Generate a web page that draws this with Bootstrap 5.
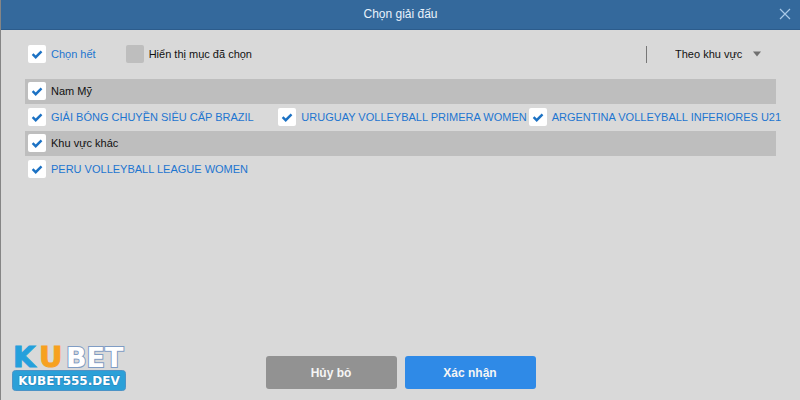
<!DOCTYPE html>
<html lang="vi">
<head>
<meta charset="utf-8">
<meta name="viewport" content="width=device-width, initial-scale=1">
<title>Chọn giải đấu</title>
<link href="https://cdn.jsdelivr.net/npm/bootstrap@5.3.0/dist/css/bootstrap.min.css" rel="stylesheet">
<style>
body { font-family: "Liberation Sans", Arial, sans-serif; font-size: 11px; line-height: 18px; color: #111; background: #d9d9d9; border-left: 1px solid #858585; }
.titlebar { background: #34699c; color: #e8f2fb; height: 30px; border-bottom: 1px solid #2c5c8c; }
.titlebar h1 { font-size: 12px; line-height: 18px; margin: 0 0 2px; font-weight: 400; }
.close-btn { color: #a9c9e8; line-height: 0; right: 8px; top: 7px; }
.toolbar { padding: 15px 24px 16px 27px; }
.filters { gap: 30px; }
.form-check-input.tick { width: 18px; height: 18px; margin: 0; border: 0; border-radius: 2px; background-color: #bebebe; flex: none; }
.form-check-input.tick:checked { background-color: #fff; background-size: 18px 18px; background-image: url("data:image/svg+xml,%3Csvg xmlns='http://www.w3.org/2000/svg' viewBox='0 0 18 18'%3E%3Cpath d='M4.6 9.2 7.7 12.2 13.5 6.4' fill='none' stroke='%231c72c4' stroke-width='2.4'/%3E%3C/svg%3E"); }
.opt { gap: 5px; white-space: nowrap; }
.opt-link { color: #1d75d0; }
.sort-by { border: 0; background: url("data:image/svg+xml,%3Csvg xmlns='http://www.w3.org/2000/svg' viewBox='0 0 8 6'%3E%3Cpath d='M0 0.5H8L4 5.5Z' fill='%23707070'/%3E%3C/svg%3E") no-repeat right center / 8px 6px; appearance: none; width: 86px; padding: 0; color: #111; }
.sort-wrap { border-left: 1px solid #777; height: 17px; padding-left: 28px; margin-right: 15px; }
.leagues { padding: 0 24px; }
.region { background: #bebebe; padding: 3px 3px 4px; }
.region-items { padding: 4px 3px 5px; }
.region-row { --bs-gutter-x: 0; }
.act { width: 131px; height: 33px; border-radius: 3px; border: 0; padding: 0; font-size: 12px; line-height: 18px; font-weight: 700; color: #f5f5f5; }
.act-cancel { background: #929292; }
.act-ok { background: #2f8ae7; }
.actions { gap: 8px; padding-bottom: 11px; }
.brand { left: 11px; bottom: 8px; }
.brand svg { overflow: visible; }
.brand text { font-family: "DejaVu Sans", sans-serif; font-weight: 700; }
</style>
<script src="https://cdn.jsdelivr.net/npm/bootstrap@5.3.0/dist/js/bootstrap.bundle.min.js"></script>
</head>
<body class="min-vh-100 d-flex flex-column position-relative">
<header class="titlebar d-flex align-items-center justify-content-center position-relative">
  <h1>Chọn giải đấu</h1>
  <button type="button" class="close-btn btn p-0 border-0 position-absolute" aria-label="Đóng">
    <svg width="14" height="14" viewBox="0 0 14 14" fill="none" stroke="currentColor" stroke-width="1.2"><path d="M2 2 12 12M12 2 2 12"/></svg>
  </button>
</header>
<main class="flex-grow-1">
  <div class="toolbar d-flex align-items-center">
    <div class="filters d-flex">
      <div class="opt opt-link d-flex align-items-center"><input class="form-check-input tick" type="checkbox" id="all" checked><label for="all">Chọn hết</label></div>
      <div class="opt d-flex align-items-center"><input class="form-check-input tick" type="checkbox" id="shown"><label for="shown">Hiển thị mục đã chọn</label></div>
    </div>
    <div class="sort-wrap d-flex align-items-center ms-auto">
      <select class="sort-by" aria-label="Sắp xếp"><option>Theo khu vực</option></select>
    </div>
  </div>
  <div class="leagues">
    <div class="region opt d-flex align-items-center"><input class="form-check-input tick" type="checkbox" id="r1" checked><label for="r1">Nam Mỹ</label></div>
    <div class="region-row row">
      <div class="col-4 region-items opt opt-link d-flex align-items-center"><input class="form-check-input tick" type="checkbox" id="l1" checked><label for="l1">GIẢI BÓNG CHUYỀN SIÊU CẤP BRAZIL</label></div>
      <div class="col-4 region-items opt opt-link d-flex align-items-center"><input class="form-check-input tick" type="checkbox" id="l2" checked><label for="l2">URUGUAY VOLLEYBALL PRIMERA WOMEN</label></div>
      <div class="col-4 region-items opt opt-link d-flex align-items-center"><input class="form-check-input tick" type="checkbox" id="l3" checked><label for="l3">ARGENTINA VOLLEYBALL INFERIORES U21</label></div>
    </div>
    <div class="region opt d-flex align-items-center"><input class="form-check-input tick" type="checkbox" id="r2" checked><label for="r2">Khu vực khác</label></div>
    <div class="region-row row">
      <div class="col-4 region-items opt opt-link d-flex align-items-center"><input class="form-check-input tick" type="checkbox" id="l4" checked><label for="l4">PERU VOLLEYBALL LEAGUE WOMEN</label></div>
    </div>
  </div>
</main>
<footer class="actions d-flex justify-content-center">
  <button type="button" class="act act-cancel btn">Hủy bỏ</button>
  <button type="button" class="act act-ok btn">Xác nhận</button>
</footer>
<div class="brand position-absolute lh-1">
  <svg class="d-block" width="114" height="50" viewBox="0 0 114 50">
    <text x="1" y="25" font-size="29" stroke="#24a0dc" fill="#24a0dc">K</text>
    <text x="27" y="25" font-size="29" stroke="#f7a11f" fill="#f7a11f">U</text>
    <text x="54" y="25" font-size="27" fill="#fff" stroke="#7f9cc4" stroke-width="2" paint-order="stroke">BET</text>
    <rect x="0.5" y="28.5" width="113" height="20" rx="3" fill="#2ba0d8" stroke="#4c93c6"/>
    <text x="57" y="43" font-size="12" fill="#fff" stroke="#2381bb" stroke-width="1" paint-order="stroke" text-anchor="middle">KUBET555.DEV</text>
  </svg>
</div>
</body>
</html>
